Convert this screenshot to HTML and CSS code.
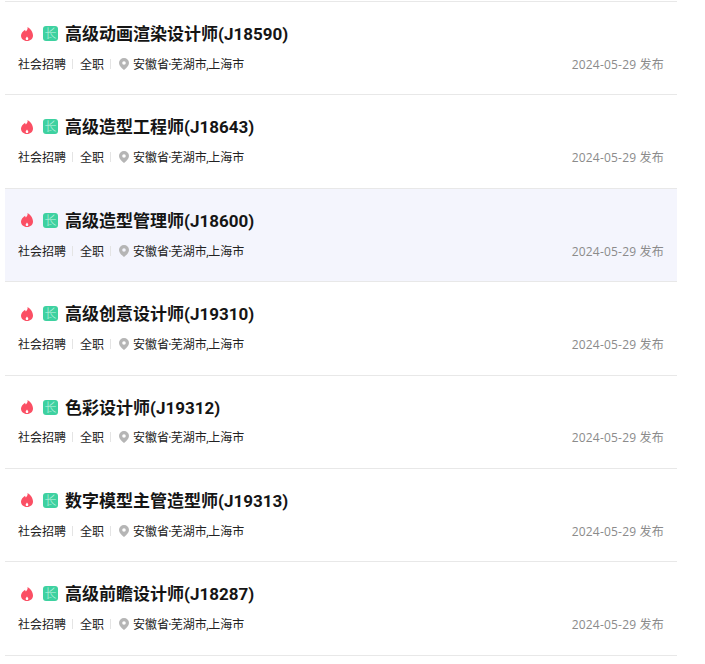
FILE: index.html
```html
<!DOCTYPE html>
<html lang="zh-CN">
<head>
  <meta charset="UTF-8">
  <title>职位列表</title>
  <link rel="stylesheet" href="styles.css">
</head>
<body>
  <svg width="0" height="0" class="defs">
    <symbol id="flame" viewBox="0 0 12 14">
      <path d="M6.500 0C7 2.100 6 3.300 4.900 4.400 4.500 3.900 4.200 3.300 4.100 2.700 2 4.200 0 6.200 0 8.500 0 11.700 2.600 14 6 14s6-2.300 6-5.500C12 5 9.500 1.600 6.500 0zM6 13c-.8 0-1.300-.6-1.300-1.300 0-.8.600-1.200 1.300-2.200.7 1 1.300 1.400 1.300 2.200 0 .7-.5 1.300-1.300 1.300z"/>
    </symbol>
    <symbol id="pin" viewBox="0 0 10 12">
      <path fill-rule="evenodd" d="M5 0a5 5 0 0 1 5 5c0 2.600-2.600 5.200-5 7-2.400-1.800-5-4.400-5-7a5 5 0 0 1 5-5zm0 3.200a1.800 1.800 0 1 0 0 3.600 1.800 1.800 0 0 0 0-3.600z"/>
    </symbol>
  </svg>
  <ul class="job-list">
    <li class="job-item">
      <div class="job-title-row">
        <svg class="icon-hot"><use href="#flame"/></svg>
        <span class="tag-long">长</span>
        <h3 class="job-title">高级动画渲染设计师(J18590)</h3>
      </div>
      <div class="job-meta">
        <span class="meta-text">社会招聘</span><i class="sep"></i>
        <span class="meta-text">全职</span><i class="sep"></i>
        <svg class="icon-pin"><use href="#pin"/></svg>
        <span class="meta-text">安徽省<span class="punct">·</span>芜湖市<span class="punct">,</span>上海市</span>
        <span class="job-date">2024-05-29 发布</span>
      </div>
    </li>
    <li class="job-item">
      <div class="job-title-row">
        <svg class="icon-hot"><use href="#flame"/></svg>
        <span class="tag-long">长</span>
        <h3 class="job-title">高级造型工程师(J18643)</h3>
      </div>
      <div class="job-meta">
        <span class="meta-text">社会招聘</span><i class="sep"></i>
        <span class="meta-text">全职</span><i class="sep"></i>
        <svg class="icon-pin"><use href="#pin"/></svg>
        <span class="meta-text">安徽省<span class="punct">·</span>芜湖市<span class="punct">,</span>上海市</span>
        <span class="job-date">2024-05-29 发布</span>
      </div>
    </li>
    <li class="job-item is-hover">
      <div class="job-title-row">
        <svg class="icon-hot"><use href="#flame"/></svg>
        <span class="tag-long">长</span>
        <h3 class="job-title">高级造型管理师(J18600)</h3>
      </div>
      <div class="job-meta">
        <span class="meta-text">社会招聘</span><i class="sep"></i>
        <span class="meta-text">全职</span><i class="sep"></i>
        <svg class="icon-pin"><use href="#pin"/></svg>
        <span class="meta-text">安徽省<span class="punct">·</span>芜湖市<span class="punct">,</span>上海市</span>
        <span class="job-date">2024-05-29 发布</span>
      </div>
    </li>
    <li class="job-item">
      <div class="job-title-row">
        <svg class="icon-hot"><use href="#flame"/></svg>
        <span class="tag-long">长</span>
        <h3 class="job-title">高级创意设计师(J19310)</h3>
      </div>
      <div class="job-meta">
        <span class="meta-text">社会招聘</span><i class="sep"></i>
        <span class="meta-text">全职</span><i class="sep"></i>
        <svg class="icon-pin"><use href="#pin"/></svg>
        <span class="meta-text">安徽省<span class="punct">·</span>芜湖市<span class="punct">,</span>上海市</span>
        <span class="job-date">2024-05-29 发布</span>
      </div>
    </li>
    <li class="job-item">
      <div class="job-title-row">
        <svg class="icon-hot"><use href="#flame"/></svg>
        <span class="tag-long">长</span>
        <h3 class="job-title">色彩设计师(J19312)</h3>
      </div>
      <div class="job-meta">
        <span class="meta-text">社会招聘</span><i class="sep"></i>
        <span class="meta-text">全职</span><i class="sep"></i>
        <svg class="icon-pin"><use href="#pin"/></svg>
        <span class="meta-text">安徽省<span class="punct">·</span>芜湖市<span class="punct">,</span>上海市</span>
        <span class="job-date">2024-05-29 发布</span>
      </div>
    </li>
    <li class="job-item">
      <div class="job-title-row">
        <svg class="icon-hot"><use href="#flame"/></svg>
        <span class="tag-long">长</span>
        <h3 class="job-title">数字模型主管造型师(J19313)</h3>
      </div>
      <div class="job-meta">
        <span class="meta-text">社会招聘</span><i class="sep"></i>
        <span class="meta-text">全职</span><i class="sep"></i>
        <svg class="icon-pin"><use href="#pin"/></svg>
        <span class="meta-text">安徽省<span class="punct">·</span>芜湖市<span class="punct">,</span>上海市</span>
        <span class="job-date">2024-05-29 发布</span>
      </div>
    </li>
    <li class="job-item">
      <div class="job-title-row">
        <svg class="icon-hot"><use href="#flame"/></svg>
        <span class="tag-long">长</span>
        <h3 class="job-title">高级前瞻设计师(J18287)</h3>
      </div>
      <div class="job-meta">
        <span class="meta-text">社会招聘</span><i class="sep"></i>
        <span class="meta-text">全职</span><i class="sep"></i>
        <svg class="icon-pin"><use href="#pin"/></svg>
        <span class="meta-text">安徽省<span class="punct">·</span>芜湖市<span class="punct">,</span>上海市</span>
        <span class="job-date">2024-05-29 发布</span>
      </div>
    </li>
  </ul>
</body>
</html>
```

FILE: styles.css
```css
html, body {
  margin: 0;
  padding: 0;
  background: #fff;
  overflow: hidden;
}
body {
  font-family: "Open Sans", "Noto Sans CJK SC", sans-serif;
  color: #111;
}
.defs { position: absolute; }
.job-list {
  list-style: none;
  width: 672px;
  margin: 1px 0 0 5px;
  padding: 0;
  border-bottom: 1px solid #e8e8e8;
}
.job-item {
  box-sizing: border-box;
  height: 93.38px;
  padding: 19px 13px 0;
  border-top: 1px solid #e8e8e8;
}
.job-item.is-hover { background: #f4f5fd; }
.job-title-row {
  display: flex;
  align-items: center;
  height: 25px;
}
.icon-hot {
  width: 12px;
  height: 14px;
  margin-left: 3px;
  fill: #fb4f64;
}
.tag-long {
  display: flex;
  align-items: center;
  justify-content: center;
  width: 15px;
  height: 15px;
  margin-left: 10px;
  border-radius: 3px;
  background: #3ed1a0;
  color: #c4f2e2;
  font-size: 12px;
  font-weight: 300;
  line-height: 15px;
}
.job-title {
  margin: 2px 0 0 7px;
  font-family: Roboto, "Noto Sans CJK SC", sans-serif;
  font-size: 17px;
  font-weight: 700;
  line-height: 25px;
  color: #151515;
}
.job-meta {
  display: flex;
  align-items: center;
  height: 20px;
  margin-top: 7.9px;
  font-size: 12px;
  color: #222;
}
.punct { margin: 0 -.75px; }
.sep {
  width: 1px;
  height: 10px;
  margin: 0 7px 0 6px;
  background: #e4e4e4;
}
.icon-pin {
  width: 10px;
  height: 12px;
  margin: 0 4px 0 1px;
  fill: #b5b5b5;
}
.job-date {
  margin-left: auto;
  font-size: 12px;
  letter-spacing: .2px;
  color: #8b8b8b;
}
```
